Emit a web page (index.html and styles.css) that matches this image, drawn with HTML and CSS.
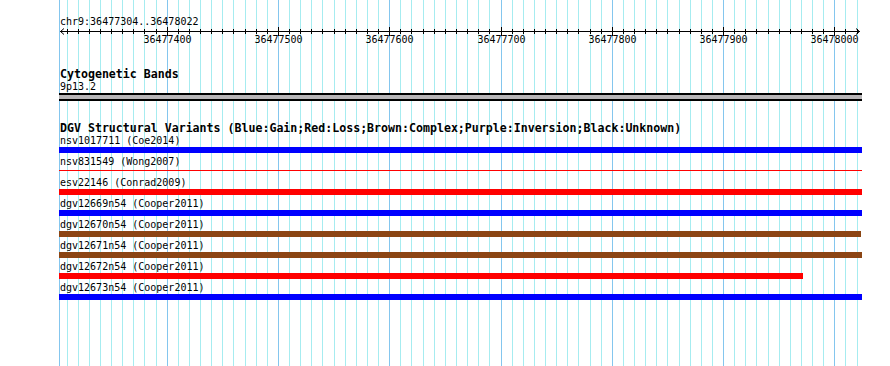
FILE: index.html
```html
<!DOCTYPE html>
<html lang="en">
<head>
    <meta charset="UTF-8">
    <title>chr9:36477304..36478022</title>
    <link rel="stylesheet" href="styles.css">
</head>
<body>
    <div class="panel">
        <!-- grid: a line every 10 bp, darker every 100 bp -->
        <svg class="grid" width="803" height="366">
            <path class="minor" d="M8.5 0V366M19.5 0V366M30.5 0V366M41.5 0V366M52.5 0V366M63.5 0V366M74.5 0V366M85.5 0V366M97.5 0V366M119.5 0V366M130.5 0V366M141.5 0V366M152.5 0V366M163.5 0V366M174.5 0V366M186.5 0V366M197.5 0V366M208.5 0V366M230.5 0V366M241.5 0V366M252.5 0V366M263.5 0V366M275.5 0V366M286.5 0V366M297.5 0V366M308.5 0V366M319.5 0V366M341.5 0V366M352.5 0V366M364.5 0V366M375.5 0V366M386.5 0V366M397.5 0V366M408.5 0V366M419.5 0V366M430.5 0V366M453.5 0V366M464.5 0V366M475.5 0V366M486.5 0V366M497.5 0V366M508.5 0V366M519.5 0V366M531.5 0V366M542.5 0V366M564.5 0V366M575.5 0V366M586.5 0V366M597.5 0V366M608.5 0V366M620.5 0V366M631.5 0V366M642.5 0V366M653.5 0V366M675.5 0V366M686.5 0V366M697.5 0V366M709.5 0V366M720.5 0V366M731.5 0V366M742.5 0V366M753.5 0V366M764.5 0V366M786.5 0V366M798.5 0V366"/>
            <path class="major" d="M0.5 0V366M108.5 0V366M219.5 0V366M330.5 0V366M442.5 0V366M553.5 0V366M664.5 0V366M775.5 0V366"/>
        </svg>

        <div class="content">
            <div class="title">chr9:36477304..36478022</div>
            <svg class="ruler" width="803" height="42">
                <path class="ticks" d="M1 4.5H801M8.5 2V7M19.5 2V7M30.5 2V7M41.5 2V7M52.5 2V7M63.5 2V7M74.5 2V7M85.5 2V7M97.5 2V7M119.5 2V7M130.5 2V7M141.5 2V7M152.5 2V7M163.5 2V7M174.5 2V7M186.5 2V7M197.5 2V7M208.5 2V7M230.5 2V7M241.5 2V7M252.5 2V7M263.5 2V7M275.5 2V7M286.5 2V7M297.5 2V7M308.5 2V7M319.5 2V7M341.5 2V7M352.5 2V7M364.5 2V7M375.5 2V7M386.5 2V7M397.5 2V7M408.5 2V7M419.5 2V7M430.5 2V7M453.5 2V7M464.5 2V7M475.5 2V7M486.5 2V7M497.5 2V7M508.5 2V7M519.5 2V7M531.5 2V7M542.5 2V7M564.5 2V7M575.5 2V7M586.5 2V7M597.5 2V7M608.5 2V7M620.5 2V7M631.5 2V7M642.5 2V7M653.5 2V7M675.5 2V7M686.5 2V7M697.5 2V7M709.5 2V7M720.5 2V7M731.5 2V7M742.5 2V7M753.5 2V7M764.5 2V7M786.5 2V7M798.5 2V7M108.5 0V9M219.5 0V9M330.5 0V9M442.5 0V9M553.5 0V9M664.5 0V9M775.5 0V9"/>
                <polyline class="arrow" points="5,1.5 1.5,4.5 5,7.5"/>
                <polyline class="arrow" points="797,1.5 800.5,4.5 797,7.5"/>
                <text x="108.5" y="16">36477400</text>
                <text x="219.5" y="16">36477500</text>
                <text x="330.5" y="16">36477600</text>
                <text x="442.5" y="16">36477700</text>
                <text x="553.5" y="16">36477800</text>
                <text x="664.5" y="16">36477900</text>
                <text x="775.5" y="16">36478000</text>
            </svg>

            <div class="track-title">Cytogenetic Bands</div>
            <div class="label band-label">9p13.2</div>
            <div class="band">
                <div class="band-fill"></div>
            </div>

            <div class="track-title dgv">DGV Structural Variants (Blue:Gain;Red:Loss;Brown:Complex;Purple:Inversion;Black:Unknown)</div>
            <div class="row">
                <div class="label">nsv1017711 (Coe2014)</div>
                <div class="bar gain" style="width: 803px"></div>
            </div>
            <div class="row">
                <div class="label">nsv831549 (Wong2007)</div>
                <div class="bar loss thin" style="width: 803px"></div>
            </div>
            <div class="row">
                <div class="label">esv22146 (Conrad2009)</div>
                <div class="bar loss" style="width: 803px"></div>
            </div>
            <div class="row">
                <div class="label">dgv12669n54 (Cooper2011)</div>
                <div class="bar gain" style="width: 803px"></div>
            </div>
            <div class="row">
                <div class="label">dgv12670n54 (Cooper2011)</div>
                <div class="bar complex" style="width: 802px"></div>
            </div>
            <div class="row">
                <div class="label">dgv12671n54 (Cooper2011)</div>
                <div class="bar complex" style="width: 803px"></div>
            </div>
            <div class="row">
                <div class="label">dgv12672n54 (Cooper2011)</div>
                <div class="bar loss" style="width: 744px"></div>
            </div>
            <div class="row">
                <div class="label">dgv12673n54 (Cooper2011)</div>
                <div class="bar gain" style="width: 803px"></div>
            </div>
        </div>
    </div>
</body>
</html>
```
FILE: styles.css
```css
body {
    margin: 0;
    background: #fff;
    color: #000;
    width: 890px;
    height: 366px;
    overflow: hidden;
    font-family: "DejaVu Sans Mono", "Liberation Mono", monospace;
    font-size: 10px;
}

.panel {
    position: relative;
    margin-left: 59px;
    width: 803px;
    height: 366px;
}

.grid {
    position: absolute;
    left: 0;
    top: 0;
    shape-rendering: crispEdges;
}

.grid .minor {
    stroke: #a6ecf0;
    stroke-width: 1;
}

.grid .major {
    stroke: #84c6ee;
    stroke-width: 1;
}

.content {
    position: relative;
    padding-top: 17px;
}

.title {
    padding-left: 1px;
    line-height: 10px;
    height: 10px;
}

.ruler {
    display: block;
    overflow: visible;
}

.ruler .ticks {
    stroke: #000;
    stroke-width: 1;
    fill: none;
    shape-rendering: crispEdges;
}

.ruler .arrow {
    stroke: #000;
    stroke-width: 1;
    fill: none;
}

.ruler text {
    font-family: "DejaVu Sans Mono", "Liberation Mono", monospace;
    font-size: 10px;
    text-anchor: middle;
    fill: #000;
}

.track-title {
    padding-left: 1px;
    font-family: "DejaVu Sans Mono", "Liberation Mono", monospace;
    font-weight: bold;
    font-size: 11.6px;
    line-height: 11px;
    height: 11px;
}

.track-title.dgv {
    margin-top: 22px;
}

.label {
    padding-left: 1px;
    line-height: 12px;
    height: 12px;
    white-space: nowrap;
}

.band-label {
    margin-top: 1px;
}

.band {
    padding: 2px 0;
    background: #000;
}

.band-fill {
    height: 4px;
    background: #b8b6b8;
}

.row {
    padding-top: 1px;
}

.bar {
    height: 6px;
    margin-bottom: 2px;
}

.bar.thin {
    height: 1px;
    margin-top: 2px;
    margin-bottom: 5px;
}

.gain {
    background: #0000ff;
}

.loss {
    background: #ff0000;
}

.complex {
    background: #8b4513;
}
```
